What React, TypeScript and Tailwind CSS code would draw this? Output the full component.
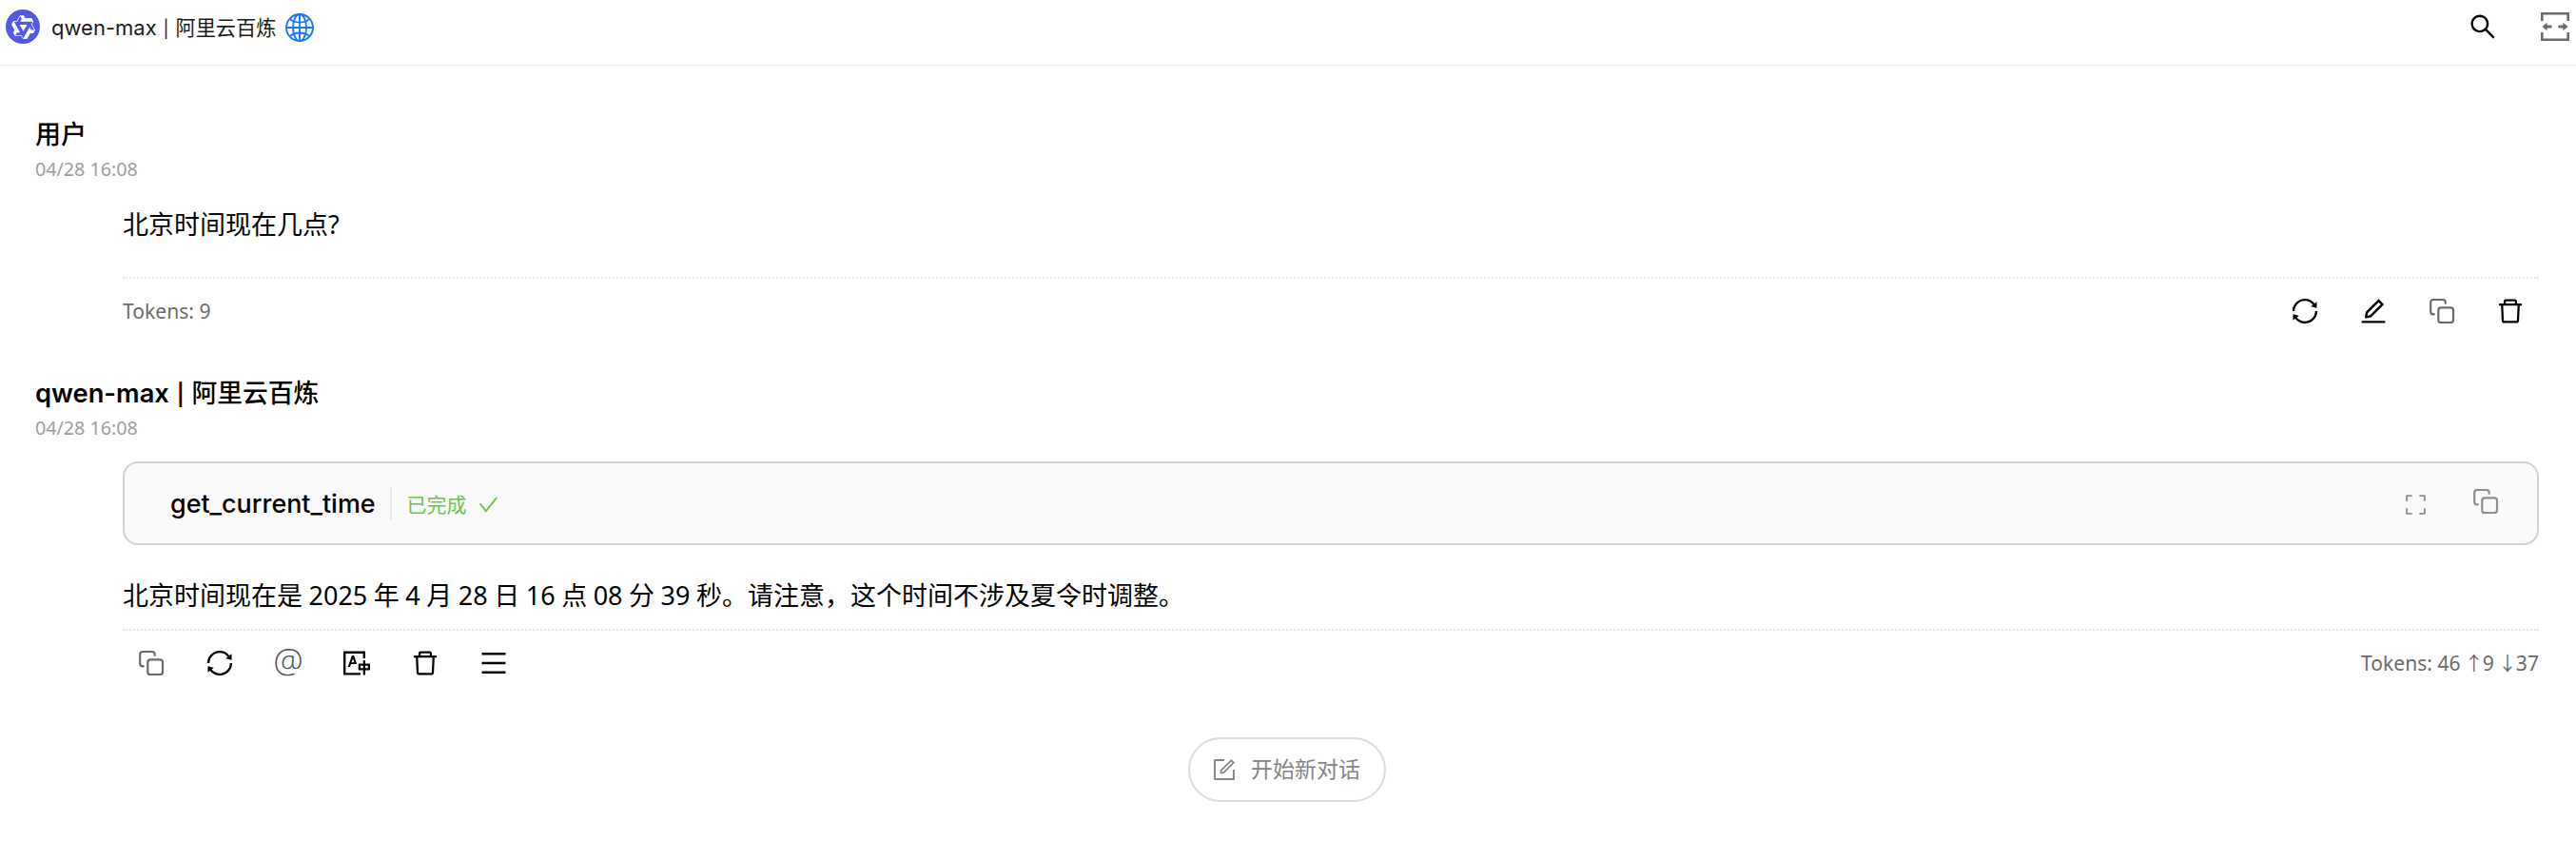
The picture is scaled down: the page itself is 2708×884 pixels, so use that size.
import type { ReactNode } from "react";
import {
  AiOutlineCheck,
  AiOutlineDelete,
  AiOutlineEdit,
  AiOutlineExpand,
  AiOutlineForm,
  AiOutlineMenu,
  AiOutlineSearch,
  AiOutlineSync,
  AiOutlineTranslation,
} from "react-icons/ai";

const UI = "font-['Inter','Noto_Sans_CJK_SC',sans-serif]";
const TEXT = "font-['Noto_Sans','Noto_Sans_CJK_SC',sans-serif]";

function QwenLogo() {
  return (
    <div className="flex size-9 items-center justify-center rounded-full bg-[#5558e3]">
      <svg viewBox="0 0 24 24" className="size-[27px]" fill="#fff" fillRule="evenodd">
        <path d="M12.604 1.34c.393.69.784 1.382 1.174 2.075a.18.18 0 00.157.091h5.552c.174 0 .322.11.446.327l1.454 2.57c.19.337.24.478.024.837-.26.43-.513.864-.76 1.3l-.367.658c-.106.196-.223.28-.04.512l2.652 4.637c.172.301.111.494-.043.77-.437.785-.882 1.564-1.335 2.34-.159.272-.352.375-.68.37-.777-.016-1.552-.01-2.327.016a.099.099 0 00-.081.05 575.097 575.097 0 01-2.705 4.74c-.169.293-.38.363-.725.364-.997.003-2.002.004-3.017.002a.537.537 0 01-.465-.271l-1.335-2.323a.09.09 0 00-.083-.049H4.982c-.285.03-.553-.001-.805-.092l-1.603-2.77a.543.543 0 01-.002-.54l1.207-2.12a.198.198 0 000-.197 550.951 550.951 0 01-1.875-3.272l-.79-1.395c-.16-.31-.173-.496.095-.965.465-.813.927-1.625 1.387-2.436.132-.234.304-.334.584-.335a338.3 338.3 0 012.589-.001.124.124 0 00.107-.063l2.806-4.895a.488.488 0 01.422-.246c.524-.001 1.053 0 1.583-.006L11.704 1c.341-.003.724.032.9.34zm-3.432.403a.06.06 0 00-.052.03L6.254 6.788a.157.157 0 01-.135.078H3.253c-.056 0-.07.025-.041.074l5.81 10.156c.025.042.013.062-.034.063l-2.795.015a.218.218 0 00-.2.116l-1.32 2.31c-.044.078-.021.118.068.118l5.716.008c.046 0 .08.02.104.061l1.403 2.454c.046.081.092.082.139 0l5.006-8.76.783-1.382a.055.055 0 01.096 0l1.424 2.53a.122.122 0 00.107.062l2.763-.02a.04.04 0 00.035-.02.041.041 0 000-.04l-2.9-5.086a.108.108 0 010-.113l.293-.507 1.12-1.977c.024-.041.012-.062-.035-.062H9.2c-.059 0-.073-.026-.043-.077l1.434-2.505a.107.107 0 000-.114L9.225 1.774a.06.06 0 00-.053-.031zm6.29 8.02c.046 0 .058.02.034.06l-.832 1.465-2.613 4.585a.056.056 0 01-.05.029.058.058 0 01-.05-.029L8.498 9.841c-.02-.034-.01-.052.028-.054l.216-.012 6.722-.012z" />
      </svg>
    </div>
  );
}

function Globe() {
  return (
    <svg viewBox="0 0 30 30" className="size-[30px]" fill="none" stroke="#1677ff" strokeWidth="1.9">
      <circle cx="15" cy="15" r="14" />
      <ellipse cx="15" cy="15" rx="7" ry="14" />
      <path d="M15 1v28M1 15h28M4.6 5.9c2.6 2.4 6.2 3.6 10.4 3.6s7.8-1.2 10.4-3.6M4.6 24.1c2.6-2.4 6.2-3.6 10.4-3.6s7.8 1.2 10.4 3.6" />
    </svg>
  );
}

function WidthIcon() {
  return (
    <svg viewBox="0 0 30 30" className="size-[30px]" fill="none" stroke="#6b6b6b" strokeWidth="2.6">
      <path d="M1.3 9V1.3h27.4V9M1.3 21v7.7h27.4V21" />
      <path d="M5 15h6.5M18.5 15H25" strokeWidth="2.8" />
      <path d="M1.4 15 6.6 10.8v8.4zM28.6 15l-5.2-4.2v8.4z" fill="#6b6b6b" stroke="none" />
    </svg>
  );
}

function CopyIcon() {
  return (
    <svg viewBox="0 0 32 32" className="size-8" fill="none" stroke="currentColor" strokeWidth="2.2" strokeLinecap="round">
      <rect x="12.3" y="12.3" width="15.7" height="15.7" rx="2.8" />
      <path d="M7.8 19.3H7a2.8 2.8 0 0 1-2.8-2.8V6.8A2.8 2.8 0 0 1 7 4h9.9a2.8 2.8 0 0 1 2.8 2.8v1" />
    </svg>
  );
}

function Cell({ children, className = "" }: { children: ReactNode; className?: string }) {
  return <button className={`flex size-[72px] items-center justify-center text-[32px] ${className}`}>{children}</button>;
}

function Arrow({ children }: { children: string }) {
  return <span className="-mx-[1.2px] text-[20px] leading-none">{children}</span>;
}

function Pipe() {
  return <span className="mx-[0.04em] text-[0.82em] leading-none">|</span>;
}

export default function App() {
  return (
    <div className="h-[884px] w-full overflow-hidden bg-white text-black">
      <header className={`flex h-[69px] items-start justify-between border-b border-[#e5e5e5] pl-1.5 pr-[7px] ${UI}`}>
        <div className="flex h-14 items-center">
          <QwenLogo />
          <div className="ml-3 mt-0.5 whitespace-pre text-[22px] leading-8 text-[#1a1a1a]">
            qwen-max <Pipe /> <span className="text-[21.2px]">阿里云百炼</span>
          </div>
          <div className="ml-2.5 mt-0.5">
            <Globe />
          </div>
        </div>
        <div className="flex h-14 items-center">
          <AiOutlineSearch className="size-8" />
          <div className="ml-[45px]">
            <WidthIcon />
          </div>
        </div>
      </header>

      <main className="pl-[37px] pr-[39px] pt-[57px]">
        <article>
          <h2 className={`text-[27px] font-medium leading-8 ${UI}`}>用户</h2>
          <time className={`mt-2 block text-[19.7px] leading-6 text-[#9e9e9e] ${TEXT}`}>04/28 16:08</time>
          <div className="ml-[92px]">
            <p className={`mt-[26px] text-[27px] leading-10 ${TEXT}`}>北京时间现在几点?</p>
            <div className="mt-[35px] flex h-[70px] items-center justify-between border-t-2 border-dotted border-[#e5e5e5]">
              <span className={`text-[21.1px] text-[#6b6b6b] ${TEXT}`}>Tokens: 9</span>
              <div className="mr-[-6px] flex">
                <Cell><AiOutlineSync /></Cell>
                <Cell><AiOutlineEdit /></Cell>
                <Cell className="text-[#6b6b6b]"><CopyIcon /></Cell>
                <Cell><AiOutlineDelete /></Cell>
              </div>
            </div>
          </div>
        </article>

        <article className="mt-[36px]">
          <h2 className={`text-[27.3px] font-semibold leading-8 ${UI}`}>
            qwen-max <Pipe /> <span className="text-[26.8px] font-medium">阿里云百炼</span>
          </h2>
          <time className={`mt-2 block text-[19.7px] leading-6 text-[#9e9e9e] ${TEXT}`}>04/28 16:08</time>
          <div className="ml-[92px]">
            <section className={`mt-[23px] flex h-[88px] items-center justify-between rounded-2xl border-2 border-[#d1d1d1] bg-[#fafafa] pl-12 pr-[38px] ${UI}`}>
              <div className="flex items-center">
                <span className="text-[26.9px] font-medium leading-10">get_current_time</span>
                <span className="ml-[15px] h-[34px] w-0.5 bg-[#e8e8e8]" />
                <span className="ml-4 mt-1 text-[21px] leading-8 text-[#6cc350]">已完成</span>
                <AiOutlineCheck className="ml-[10px] mt-0.5 size-[25px] text-[#6cc350]" />
              </div>
              <div className="flex items-center text-[#8f8f8f]">
                <AiOutlineExpand className="mt-0.5 size-[25px]" />
                <div className="-mt-1 ml-[45px]">
                  <CopyIcon />
                </div>
              </div>
            </section>
            <p className={`mt-[33px] text-[27px] leading-10 [word-spacing:-0.5px] ${TEXT}`}>
              北京时间现在是 2025 年 4 月 28 日 16 点 08 分 39 秒。请注意，这个时间不涉及夏令时调整。
            </p>
            <div className="mt-[15px] flex h-[70px] items-center justify-between border-t-2 border-dotted border-[#e5e5e5]">
              <div className="ml-[-6px] flex">
                <Cell className="text-[#6b6b6b]"><CopyIcon /></Cell>
                <Cell><AiOutlineSync /></Cell>
                <Cell className="text-[#505050]">
                  <span className="mb-1.5 font-['Open_Sans',sans-serif] text-[35px] font-light leading-9">@</span>
                </Cell>
                <Cell><AiOutlineTranslation /></Cell>
                <Cell><AiOutlineDelete /></Cell>
                <Cell><AiOutlineMenu /></Cell>
              </div>
              <span className={`text-[21.1px] text-[#6b6b6b] ${TEXT}`}>
                Tokens: 46 <Arrow>↑</Arrow>9 <Arrow>↓</Arrow>37
              </span>
            </div>
          </div>
        </article>

        <div className="mt-[44px] flex justify-center">
          <button className={`flex h-[68px] w-[208px] items-center rounded-full border-2 border-[#dcdcdc] pl-[22px] text-[#858585] ${UI}`}>
            <AiOutlineForm className="size-7" />
            <span className="ml-3.5 text-[23px] leading-8">开始新对话</span>
          </button>
        </div>
      </main>
    </div>
  );
}
